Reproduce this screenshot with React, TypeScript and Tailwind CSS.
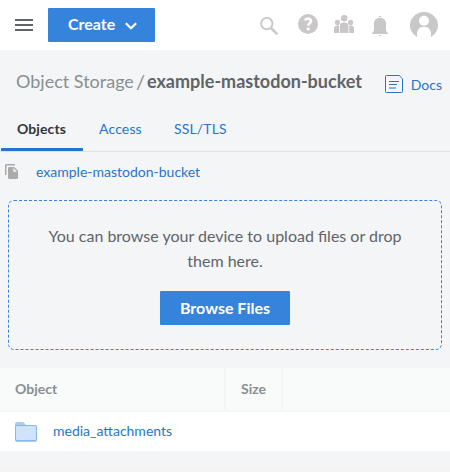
import React from 'react';

function TopBar() {
  return (
    <header className="flex h-[50px] items-start bg-white pl-[15px] pr-[12px]">
      <button aria-label="Open menu" className="mt-[19px] flex w-[18px] flex-col gap-[3px]">
        <span className="h-[2px] w-full bg-[#606469]" />
        <span className="h-[2px] w-full bg-[#606469]" />
        <span className="h-[2px] w-full bg-[#606469]" />
      </button>
      <button className="ml-[15px] mt-[8px] flex h-[34px] w-[107px] items-center rounded-[1px] bg-[#3683dc] pl-[20px] text-[16px] font-bold leading-[32px] text-white">
        <span className="w-[57px] pb-[2px] text-left">Create</span>
        <svg width="12" height="8" viewBox="0 0 12 8" className="mt-[2px]" fill="none" stroke="white" strokeWidth="2.2">
          <path d="M.8 1.2 6 6.2l5.2-5" />
        </svg>
      </button>
      <div className="ml-auto flex h-[50px] items-start text-[#c9c7c7]">
        <svg width="18" height="18" viewBox="0 0 18 18" className="mr-[20px] mt-[17px]" fill="none" stroke="currentColor">
          <circle cx="6.8" cy="6.6" r="5.7" strokeWidth="1.9" />
          <path d="m11 11 6.3 6.2" strokeWidth="2.5" />
        </svg>
        <svg width="20" height="20" viewBox="0 0 20 20" className="mr-[16px] mt-[14px]">
          <circle cx="10" cy="10" r="10" fill="currentColor" />
          <path d="M6.9 6.4c.8-1.2 1.8-1.8 3.1-1.8 1.8 0 3 1 3 2.6 0 2.1-2.8 2.2-2.8 4.5" fill="none" stroke="white" strokeWidth="2.6" />
          <circle cx="10.2" cy="14.9" r="1.7" fill="white" />
        </svg>
        <svg width="20" height="18" viewBox="0 0 20 18" className="mr-[18px] mt-[15px]" fill="currentColor">
          <circle cx="10.2" cy="3.3" r="3.3" />
          <circle cx="3.5" cy="7.4" r="2.6" />
          <circle cx="16.6" cy="7.4" r="2.6" />
          <path d="M6 18v-7.4c0-2 1.3-3.2 4.1-3.2s4.3 1.2 4.3 3.2V18zM0 18v-4.4c0-2 1.5-3 3.3-3 .8 0 1.4.1 1.9.4v7zM15.2 18v-7c.5-.3 1.1-.4 1.7-.4 1.8 0 3.1 1 3.1 3V18z" />
        </svg>
        <svg width="16" height="20" viewBox="0 0 16 20" className="mr-[22px] mt-[16px]" fill="currentColor">
          <path d="M7 0h2v1H7zM8 1.8c3.8 0 6 2.5 6 6v5.2c0 1.8.6 2.8 2 4.3v.7H0v-.7c1.4-1.5 2-2.5 2-4.3V7.8c0-3.5 2.2-6 6-6zM7 19h2v1H7z" />
        </svg>
        <svg width="28" height="26" viewBox="0 0 28 26" className="mt-[12px]">
          <path d="M7 25C3 22.6 0 18.4 0 13.3A14 13.3 0 0 1 28 13.3C28 18.4 25 22.6 21 25z" fill="currentColor" />
          <circle cx="14" cy="8.7" r="5" fill="white" />
          <path d="M7 26v-3.5c0-5 2.5-7.7 7-7.7s7 2.7 7 7.7V26z" fill="white" />
        </svg>
      </div>
    </header>
  );
}

function Heading() {
  return (
    <div className="flex h-[58px] items-start justify-between pl-[16px] pr-[8px]">
      <h1 className="mt-[19px] flex whitespace-pre text-[18px] leading-[24px] text-[#888f91]">
        <span className="w-[120px]">Object Storage</span>
        <span className="w-[11px] text-[20px]">/</span>
        <span className="font-bold text-[#606469]">example-mastodon-bucket</span>
      </h1>
      <a className="mt-[24px] flex h-[20px] items-center text-[14px] text-[#2575d0]">
        <svg width="18" height="18" viewBox="0 0 18 18" fill="none" stroke="currentColor" className="mr-[8px] -mt-[1px]">
          <path d="M1.5.5h12.7l3.3 3.3v12.7a1 1 0 0 1-1 1h-15a1 1 0 0 1-1-1v-15a1 1 0 0 1 1-1z" />
          <path d="M4 6.5h10M4 9.5h8M4 13h7" />
        </svg>
        <span>Docs</span>
      </a>
    </div>
  );
}

function Tabs() {
  return (
    <nav className="flex h-[44px] border-b border-[#dfe1e4] pl-[1px] text-[14px] leading-[20px] text-[#2575d0]">
      <a className="h-[43px] w-[82px] border-b-[3px] border-[#2575d0] pl-[16px] pt-[11px] font-bold tracking-[0.1px] text-[#32363c]">Objects</a>
      <a className="w-[75px] pl-[16px] pt-[11px] tracking-[0.15px]">Access</a>
      <a className="pl-[16px] pt-[11px] tracking-[0.15px]">SSL/TLS</a>
    </nav>
  );
}

function Breadcrumb() {
  return (
    <div className="flex h-[48px] items-start pl-[5px]">
      <svg width="14" height="16" viewBox="0 0 14 16" fill="#aaa" className="mt-[12px]">
        <path d="M0 1.4C0 .6.6 0 1.4 0H10v1.5H1.5V11H0z" />
        <path fillRule="evenodd" d="M3 4.3C3 3.5 3.5 3 4.2 3h5L13 6.8v6.8c0 .8-.5 1.3-1.2 1.3H4.2c-.7 0-1.2-.5-1.2-1.3zM8.3 4v3.7H12z" />
      </svg>
      <a className="ml-[17px] mt-[10px] text-[14px] leading-[20px] text-[#2575d0]">example-mastodon-bucket</a>
    </div>
  );
}

function DropZone() {
  return (
    <section className="mx-[8px] flex h-[150px] flex-col items-center rounded-[6px] border border-dashed border-[#3683dc] pt-[22px]">
      <p className="text-center text-[16px] leading-[25px] text-[#606469]">
        You can browse your device to upload files or drop
        <br />
        them here.
      </p>
      <button className="mt-[18px] h-[34px] w-[130px] rounded-[1px] bg-[#3683dc] text-[16px] font-bold leading-[34px] text-white">
        Browse Files
      </button>
    </section>
  );
}

function ObjectTable() {
  return (
    <div className="mt-[18px]">
      <div className="flex h-[44px] border-b-2 border-[#f4f5f6] bg-[#f9fafa] text-[14px] font-bold leading-[42px] text-[#888f91]">
        <div className="w-[226px] border-r-2 border-[#f4f5f6] pl-[15px]">Object</div>
        <div className="w-[57px] border-r-2 border-[#f4f5f6] pl-[15px]">Size</div>
      </div>
      <div className="flex h-[39px] items-center bg-white pl-[15px]">
        <svg width="22" height="20" viewBox="0 0 22 20">
          <path d="M0 2Q0 0 2 0h5.5Q9 0 10 2l1 1h9q2 0 2 2v13q0 2-2 2H2q-2 0-2-2z" fill="#a9cbf3" />
          <rect x=".5" y="3.5" width="21" height="15" rx="1.5" fill="#cfe3fe" stroke="#89b7ed" />
        </svg>
        <a className="ml-[16px] pb-[1px] text-[14px] leading-[20px] text-[#2575d0]">media_attachments</a>
      </div>
    </div>
  );
}

export default function App() {
  return (
    <main className="h-[472px] w-[450px] overflow-hidden bg-[#f4f5f7] font-['Lato',sans-serif]">
      <TopBar />
      <Heading />
      <Tabs />
      <Breadcrumb />
      <DropZone />
      <ObjectTable />
      <div className="mt-[16px] h-[5px] bg-[#f4f4f4]" />
    </main>
  );
}
